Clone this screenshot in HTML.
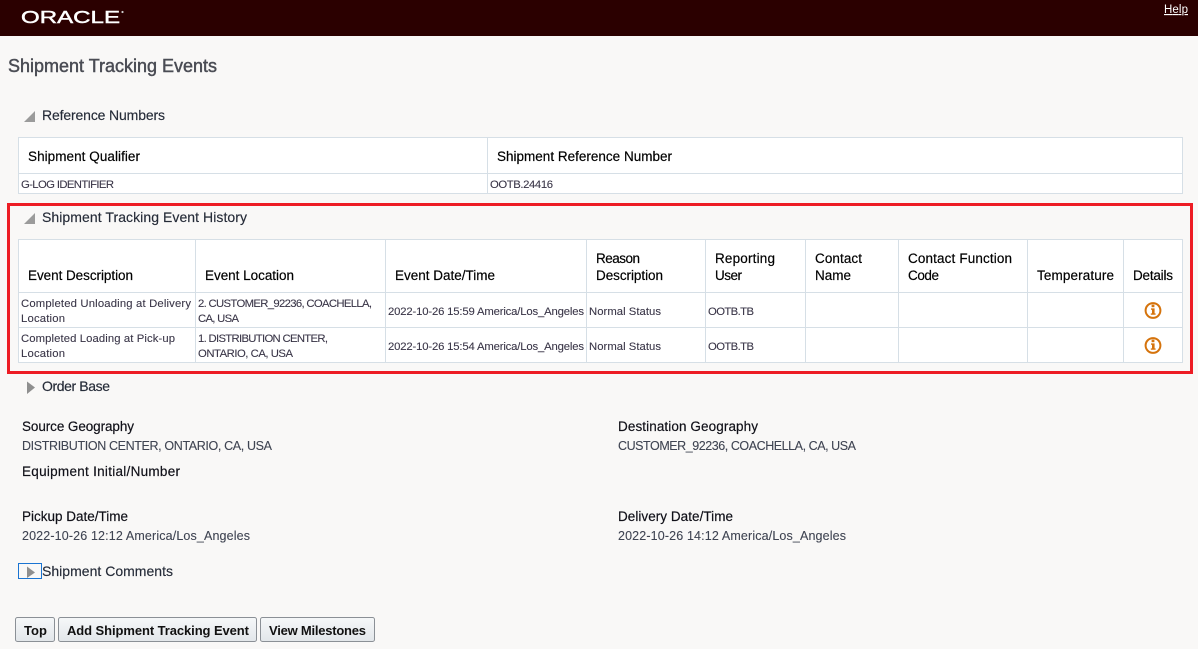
<!DOCTYPE html>
<html lang="en">
<head>
<meta charset="utf-8">
<title>Shipment Tracking Events</title>
<style>
html,body{margin:0;padding:0;width:1198px;height:649px;overflow:hidden;background:#f9f8f7}
svg{display:block}
text{font-family:"Liberation Sans",sans-serif;white-space:pre}
.h{font-size:13.5px;fill:#000;stroke:#000;stroke-width:.18px}
.s{font-size:14px;fill:#252b38;stroke:#252b38;stroke-width:.15px}
.c{font-size:11.3px;fill:#3a3648;stroke:#3a3648;stroke-width:.1px}
.l{font-size:13.5px;fill:#101018;stroke:#101018;stroke-width:.18px}
.v{font-size:12.5px;fill:#3f4452;stroke:#3f4452;stroke-width:.1px}
.b{font-size:13px;font-weight:bold;fill:#111}
.g{fill:#d6dfe6}
</style>
</head>
<body>
<svg width="1198" height="649" viewBox="0 0 1198 649" xmlns="http://www.w3.org/2000/svg">
<defs>
<linearGradient id="btn" x1="0" y1="0" x2="0" y2="1"><stop offset="0" stop-color="#f6f8f9"/><stop offset="1" stop-color="#e2e6ea"/></linearGradient>
</defs>
<rect width="1198" height="649" fill="#f9f8f7"/>
<rect width="1198" height="36" fill="#2b0000"/>
<text x="21" y="23" font-size="17.4" fill="#fff" stroke="#fff" stroke-width=".45" textLength="99" lengthAdjust="spacingAndGlyphs">ORACLE</text>
<circle cx="122.5" cy="12" r="1.1" fill="#ccc"/>
<text x="1164" y="13" font-size="11.5" fill="#fff" text-decoration="underline" textLength="24">Help</text>

<text x="8" y="72" font-size="18" fill="#4a4c54" textLength="209" stroke="#4a4c54" stroke-width=".45">Shipment Tracking Events</text>

<polygon points="24,122 35,122 35,111" fill="#9b9b9b"/>
<text class="s" x="42" y="120" textLength="123">Reference Numbers</text>

<rect x="18" y="137" width="1165" height="57" fill="#fff"/>
<g class="g">
<rect x="18" y="137" width="1165" height="1"/><rect x="18" y="173" width="1165" height="1"/><rect x="18" y="193" width="1165" height="1"/>
<rect x="18" y="137" width="1" height="57"/><rect x="487" y="137" width="1" height="57"/><rect x="1182" y="137" width="1" height="57"/>
</g>
<text class="h" x="28" y="161" textLength="112">Shipment Qualifier</text>
<text class="h" x="497" y="161" textLength="175">Shipment Reference Number</text>
<text class="c" x="21" y="188" textLength="93">G-LOG IDENTIFIER</text>
<text class="c" x="490" y="188" textLength="63">OOTB.24416</text>

<rect x="8.5" y="204.5" width="1183" height="168" fill="none" stroke="#ed1c24" stroke-width="3"/>
<polygon points="24,224 35,224 35,213" fill="#9b9b9b"/>
<text class="s" x="42" y="222" textLength="205">Shipment Tracking Event History</text>

<rect x="18" y="239" width="1165" height="124" fill="#fff"/>
<g class="g">
<rect x="18" y="239" width="1165" height="1"/><rect x="18" y="292" width="1165" height="1"/><rect x="18" y="327" width="1165" height="1"/><rect x="18" y="362" width="1165" height="1"/>
<rect x="18" y="239" width="1" height="124"/><rect x="195" y="239" width="1" height="124"/><rect x="385" y="239" width="1" height="124"/><rect x="586" y="239" width="1" height="124"/><rect x="705" y="239" width="1" height="124"/><rect x="805" y="239" width="1" height="124"/><rect x="898" y="239" width="1" height="124"/><rect x="1027" y="239" width="1" height="124"/><rect x="1123" y="239" width="1" height="124"/><rect x="1182" y="239" width="1" height="124"/>
</g>
<text class="h" x="28" y="280" textLength="105">Event Description</text>
<text class="h" x="205" y="280" textLength="89">Event Location</text>
<text class="h" x="395" y="280" textLength="100">Event Date/Time</text>
<text class="h" x="596" y="263" textLength="44">Reason</text>
<text class="h" x="596" y="280" textLength="67">Description</text>
<text class="h" x="715" y="263" textLength="60">Reporting</text>
<text class="h" x="715" y="280" textLength="27">User</text>
<text class="h" x="815" y="263" textLength="47">Contact</text>
<text class="h" x="815" y="280" textLength="36">Name</text>
<text class="h" x="908" y="263" textLength="104">Contact Function</text>
<text class="h" x="908" y="280" textLength="31">Code</text>
<text class="h" x="1037" y="280" textLength="77">Temperature</text>
<text class="h" x="1133" y="280" textLength="40">Details</text>

<text class="c" x="21" y="307" textLength="170">Completed Unloading at Delivery</text>
<text class="c" x="21" y="322" textLength="44">Location</text>
<text class="c" x="198" y="307" textLength="174">2. CUSTOMER_92236, COACHELLA,</text>
<text class="c" x="198" y="322" textLength="41">CA, USA</text>
<text class="c" x="388" y="315" textLength="196">2022-10-26 15:59 America/Los_Angeles</text>
<text class="c" x="589" y="315" textLength="72">Normal Status</text>
<text class="c" x="708" y="315" textLength="46">OOTB.TB</text>

<text class="c" x="21" y="342" textLength="154">Completed Loading at Pick-up</text>
<text class="c" x="21" y="357" textLength="44">Location</text>
<text class="c" x="198" y="342" textLength="130">1. DISTRIBUTION CENTER,</text>
<text class="c" x="198" y="357" textLength="95">ONTARIO, CA, USA</text>
<text class="c" x="388" y="350" textLength="196">2022-10-26 15:54 America/Los_Angeles</text>
<text class="c" x="589" y="350" textLength="72">Normal Status</text>
<text class="c" x="708" y="350" textLength="46">OOTB.TB</text>

<g fill="#d5730c">
<circle cx="1153" cy="310.5" r="7.4" fill="none" stroke="#d5730c" stroke-width="2"/>
<rect x="1151.6" y="304.6" width="2.8" height="2.6"/><path d="M1151 308.4h3.6v5h1v1.4h-4.8v-1.4h1.2v-3.6h-1z"/>
<circle cx="1153" cy="345.5" r="7.4" fill="none" stroke="#d5730c" stroke-width="2"/>
<rect x="1151.6" y="339.6" width="2.8" height="2.6"/><path d="M1151 343.4h3.6v5h1v1.4h-4.8v-1.4h1.2v-3.6h-1z"/>
</g>

<polygon points="27,381.5 35,387.5 27,394" fill="#8f8f8f"/>
<text class="s" x="42" y="391" textLength="68">Order Base</text>

<text class="l" x="22" y="431" textLength="112">Source Geography</text>
<text class="v" x="22" y="450" textLength="250">DISTRIBUTION CENTER, ONTARIO, CA, USA</text>
<text class="l" x="22" y="476" textLength="158">Equipment Initial/Number</text>
<text class="l" x="22" y="521" textLength="106">Pickup Date/Time</text>
<text class="v" x="22" y="540" textLength="228">2022-10-26 12:12 America/Los_Angeles</text>

<text class="l" x="618" y="431" textLength="140">Destination Geography</text>
<text class="v" x="618" y="450" textLength="238">CUSTOMER_92236, COACHELLA, CA, USA</text>
<text class="l" x="618" y="521" textLength="115">Delivery Date/Time</text>
<text class="v" x="618" y="540" textLength="228">2022-10-26 14:12 America/Los_Angeles</text>

<rect x="18.5" y="563.5" width="23" height="15" fill="none" stroke="#1a74d2" stroke-width="1"/>
<polygon points="27,566.5 35,572.5 27,578" fill="#8f8f8f"/>
<text class="s" x="42" y="576" textLength="131">Shipment Comments</text>

<g fill="url(#btn)" stroke="#8b9096">
<rect x="15.5" y="617.5" width="39" height="24" rx="2"/>
<rect x="58.5" y="617.5" width="198" height="24" rx="2"/>
<rect x="260.5" y="617.5" width="114" height="24" rx="2"/>
</g>
<text class="b" x="24" y="635" textLength="23">Top</text>
<text class="b" x="67" y="635" textLength="182">Add Shipment Tracking Event</text>
<text class="b" x="269" y="635" textLength="97">View Milestones</text>
</svg>
</body>
</html>
